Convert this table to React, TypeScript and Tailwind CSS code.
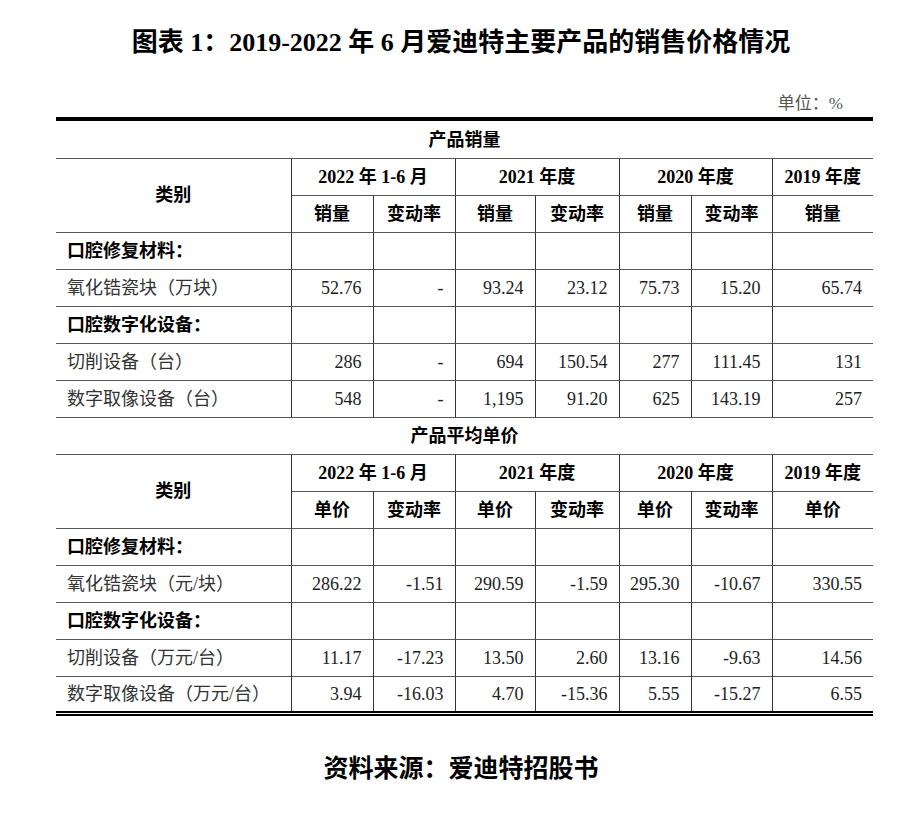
import React from "react";

type Row = { label: string; group?: boolean; values?: string[] };

const years = [
  { title: "2022 年 1-6 月", span: 2 },
  { title: "2021 年度", span: 2 },
  { title: "2020 年度", span: 2 },
  { title: "2019 年度", span: 1 },
];

const salesRows: Row[] = [
  { label: "口腔修复材料：", group: true },
  { label: "氧化锆瓷块（万块）", values: ["52.76", "-", "93.24", "23.12", "75.73", "15.20", "65.74"] },
  { label: "口腔数字化设备：", group: true },
  { label: "切削设备（台）", values: ["286", "-", "694", "150.54", "277", "111.45", "131"] },
  { label: "数字取像设备（台）", values: ["548", "-", "1,195", "91.20", "625", "143.19", "257"] },
];

const priceRows: Row[] = [
  { label: "口腔修复材料：", group: true },
  { label: "氧化锆瓷块（元/块）", values: ["286.22", "-1.51", "290.59", "-1.59", "295.30", "-10.67", "330.55"] },
  { label: "口腔数字化设备：", group: true },
  { label: "切削设备（万元/台）", values: ["11.17", "-17.23", "13.50", "2.60", "13.16", "-9.63", "14.56"] },
  { label: "数字取像设备（万元/台）", values: ["3.94", "-16.03", "4.70", "-15.36", "5.55", "-15.27", "6.55"] },
];

const cell = "h-[37px] border-b border-[#555] p-0";
const vline = "border-r border-r-[#333]";

const Section: React.FC<{ title: string; metric: string; rows: Row[]; first?: boolean; last?: boolean }> = ({
  title,
  metric,
  rows,
  first,
  last,
}) => {
  const sub = [metric, "变动率", metric, "变动率", metric, "变动率", metric];
  return (
    <>
      <tr>
        <td
          colSpan={8}
          className={`${cell} text-center font-bold text-black ${first ? "h-[39px] border-t-4 border-t-black pt-[2px]" : ""}`}
        >
          {title}
        </td>
      </tr>
      <tr>
        <td rowSpan={2} className={`${cell} ${vline} text-center font-bold text-black`}>
          类别
        </td>
        {years.map((y, i) => (
          <td
            key={y.title}
            colSpan={y.span}
            className={`${cell} ${i < years.length - 1 ? vline : ""} text-center font-bold text-black`}
          >
            {y.title}
          </td>
        ))}
      </tr>
      <tr>
        {sub.map((s, i) => (
          <td key={i} className={`${cell} ${i < sub.length - 1 ? vline : ""} text-center font-bold text-black`}>
            {s}
          </td>
        ))}
      </tr>
      {rows.map((r, ri) => {
        const isLast = last && ri === rows.length - 1;
        const b = isLast ? "border-b-[5px] border-double border-b-black" : "";
        return (
          <tr key={ri}>
            <td
              className={`${cell} ${vline} ${b} pl-[11px] text-left ${
                r.group ? "font-bold text-black" : "text-[#333]"
              }`}
            >
              {r.label}
            </td>
            {Array.from({ length: 7 }).map((_, i) => (
              <td key={i} className={`${cell} ${i < 6 ? vline : ""} ${b} pr-[11px] text-right text-[#222]`}>
                {r.values ? r.values[i] : ""}
              </td>
            ))}
          </tr>
        );
      })}
    </>
  );
};

export default function App() {
  return (
    <div className="w-[922px] h-[814px] bg-white font-['Liberation_Serif','Noto_Sans_CJK_SC',serif]">
      <h1 className="pt-[28px] text-center text-[26px] leading-[30px] font-bold text-black">
        图表 1：2019-2022 年 6 月爱迪特主要产品的销售价格情况
      </h1>
      <div className="mt-[35px] pr-[79px] text-right text-[17px] leading-[22px] text-[#555]">单位：%</div>
      <table className="mt-[2px] ml-[56px] w-[817px] table-fixed border-collapse text-[18px] leading-[22px]">
        <colgroup>
          <col className="w-[235px]" />
          <col className="w-[82px]" />
          <col className="w-[82px]" />
          <col className="w-[80px]" />
          <col className="w-[84px]" />
          <col className="w-[72px]" />
          <col className="w-[81px]" />
          <col className="w-[101px]" />
        </colgroup>
        <tbody>
          <Section title="产品销量" metric="销量" rows={salesRows} first />
          <Section title="产品平均单价" metric="单价" rows={priceRows} last />
        </tbody>
      </table>
      <div className="mt-[38px] text-center text-[25px] leading-[30px] font-bold text-black">
        资料来源：爱迪特招股书
      </div>
    </div>
  );
}
